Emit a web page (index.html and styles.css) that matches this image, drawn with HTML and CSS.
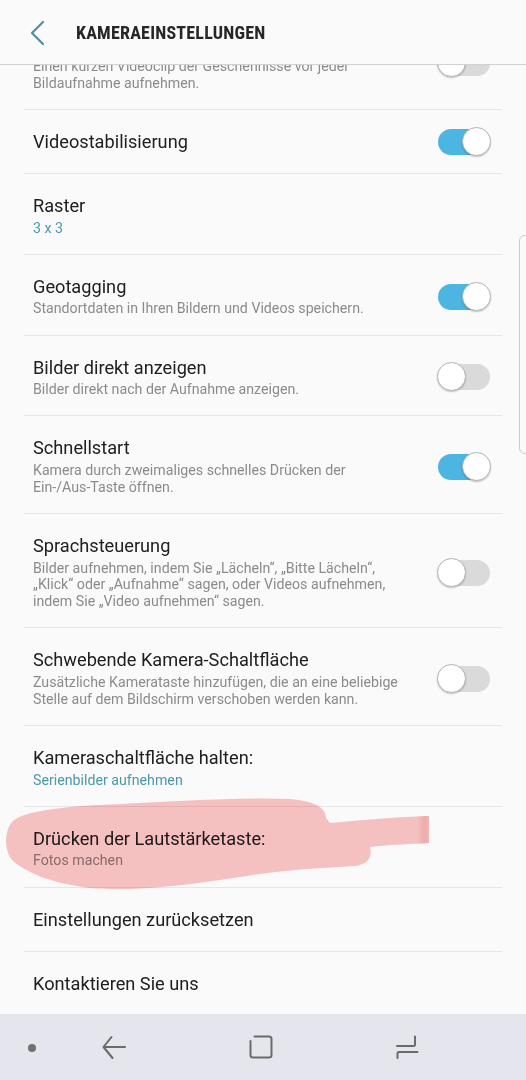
FILE: index.html
```html
<!DOCTYPE html>
<html lang="de">
<head>
<meta charset="utf-8">
<title>Kameraeinstellungen</title>
<link rel="stylesheet" href="styles.css">
</head>
<body>
<div class="screen">
  <header class="appbar">
    <svg class="back" width="24" height="28" viewBox="0 0 24 28"><path d="M17 3 L6 14 L17 25" fill="none" stroke="#4f8fa3" stroke-width="2.2" stroke-linecap="round" stroke-linejoin="round"/></svg>
    <h1 class="title">KAMERAEINSTELLUNGEN</h1>
  </header>

  <main class="viewport">
    <ul class="list">
      <li class="row">
        <div class="text">
          <div class="label">Bewegungsfoto</div>
          <div class="sub">Einen kurzen Videoclip der Geschehnisse vor jeder<br>Bildaufnahme aufnehmen.</div>
        </div>
        <span class="switch"></span>
      </li>
      <li class="row single">
        <div class="text"><div class="label">Videostabilisierung</div></div>
        <span class="switch on"></span>
      </li>
      <li class="row">
        <div class="text">
          <div class="label">Raster</div>
          <div class="sub accent">3 x 3</div>
        </div>
      </li>
      <li class="row">
        <div class="text">
          <div class="label">Geotagging</div>
          <div class="sub">Standortdaten in Ihren Bildern und Videos speichern.</div>
        </div>
        <span class="switch on"></span>
      </li>
      <li class="row">
        <div class="text">
          <div class="label">Bilder direkt anzeigen</div>
          <div class="sub">Bilder direkt nach der Aufnahme anzeigen.</div>
        </div>
        <span class="switch"></span>
      </li>
      <li class="row">
        <div class="text">
          <div class="label">Schnellstart</div>
          <div class="sub">Kamera durch zweimaliges schnelles Drücken der<br>Ein-/Aus-Taste öffnen.</div>
        </div>
        <span class="switch on"></span>
      </li>
      <li class="row">
        <div class="text">
          <div class="label">Sprachsteuerung</div>
          <div class="sub">Bilder aufnehmen, indem Sie „Lächeln“, „Bitte Lächeln“,<br>„Klick“ oder „Aufnahme“ sagen, oder Videos aufnehmen,<br>indem Sie „Video aufnehmen“ sagen.</div>
        </div>
        <span class="switch"></span>
      </li>
      <li class="row">
        <div class="text">
          <div class="label">Schwebende Kamera-Schaltfläche</div>
          <div class="sub">Zusätzliche Kamerataste hinzufügen, die an eine beliebige<br>Stelle auf dem Bildschirm verschoben werden kann.</div>
        </div>
        <span class="switch"></span>
      </li>
      <li class="row">
        <div class="text">
          <div class="label">Kameraschaltfläche halten:</div>
          <div class="sub accent">Serienbilder aufnehmen</div>
        </div>
      </li>
      <li class="row">
        <div class="text">
          <div class="label">Drücken der Lautstärketaste:</div>
          <div class="sub">Fotos machen</div>
        </div>
      </li>
      <li class="row single">
        <div class="text"><div class="label">Einstellungen zurücksetzen</div></div>
      </li>
      <li class="row single">
        <div class="text"><div class="label">Kontaktieren Sie uns</div></div>
      </li>
    </ul>
  </main>

  <nav class="navbar">
    <span class="pin"></span>
    <span class="navbtn">
      <svg width="24" height="24" viewBox="0 0 24 24"><path d="M23 12 H2 M9.5 2 L1.5 12 L10.5 23" fill="none" stroke="#6a6a6a" stroke-width="2" stroke-linecap="round" stroke-linejoin="round"/></svg>
    </span>
    <span class="navbtn">
      <svg width="24" height="24" viewBox="0 0 24 24"><path d="M1.5 6 V20 Q1.5 22.5 4 22.5 H20 Q22.5 22.5 22.5 20 V4 Q22.5 1.5 20 1.5 H5.5" fill="none" stroke="#6a6a6a" stroke-width="2" stroke-linecap="round"/></svg>
    </span>
    <span class="navbtn">
      <svg width="24" height="24" viewBox="0 0 24 24"><path d="M2 11 H18.5 Q20 11 20 9.5 V1.5 M22.5 17 H4 Q2.5 17 2.5 18.5 V23" fill="none" stroke="#6a6a6a" stroke-width="2" stroke-linecap="round"/></svg>
    </span>
  </nav>

  <div class="edge-handle"></div>

  <svg class="marker" width="440" height="110" viewBox="0 790 440 110">
    <defs>
      <linearGradient id="tip" x1="0" x2="1" y1="0" y2="0">
        <stop offset="0" stop-color="#f8c2c2"/>
        <stop offset="0.6" stop-color="#f4afaf"/>
        <stop offset="1" stop-color="#f6baba"/>
      </linearGradient>
    </defs>
    <path d="M12 822 C20 812 60 806 120 804 C180 801 240 797 290 799 C315 801 326 808 326 818 L330 823 C360 820 400 817 429 816 L429 843 C410 844 385 845 370 847 C372 856 370 864 355 866 C320 868 280 870 240 877 C190 885 130 892 90 888 C50 883 25 872 12 860 C4 850 4 832 12 822 Z" fill="#fac5c4"/>
    <path d="M418 816.6 L429 816 L429 843 L418 843.5 Z" fill="url(#tip)"/>
  </svg>
</div>
</body>
</html>
```

FILE: styles.css
```css
html, body {
  margin: 0;
  padding: 0;
  background: #fafafa;
}

.screen {
  position: relative;
  width: 526px;
  height: 1080px;
  overflow: hidden;
  background: #fafafa;
  font-family: Roboto, "Noto Sans", sans-serif;
  color: #212121;
  display: flex;
  flex-direction: column;
}

.appbar {
  position: relative;
  z-index: 2;
  flex: 0 0 64px;
  height: 64px;
  display: flex;
  align-items: center;
  padding-left: 26px;
  gap: 26px;
  background: #fafafa;
  box-shadow: 0 1px 1px rgba(0, 0, 0, 0.08), 0 1px 0 #e4e4e4;
}

.back {
  display: block;
  margin-top: 1px;
}

.title {
  margin: 0;
  font-family: "Roboto Condensed", "Liberation Sans Narrow", Roboto, sans-serif;
  font-weight: 700;
  font-size: 18px;
  letter-spacing: 0.2px;
  color: #262626;
  margin-top: 1px;
}

.viewport {
  flex: 0 0 950px;
  height: 950px;
  overflow: hidden;
}

.list {
  list-style: none;
  margin: -51.5px 24px 0;
  padding: 0;
}

.row {
  display: flex;
  align-items: center;
  justify-content: space-between;
  gap: 16px;
  padding: 21px 12px 17.5px 9px;
  border-bottom: 1px solid #e6e6e6;
}

.row.single {
  padding-bottom: 21px;
}

.text {
  flex: 1;
  min-width: 0;
}

.label {
  font-size: 18.2px;
  line-height: 21px;
  color: #202020;
  white-space: nowrap;
}

.sub {
  margin-top: 3.5px;
  font-size: 14.2px;
  line-height: 16.8px;
  color: #8b8b8b;
  white-space: nowrap;
}

.sub.accent {
  color: #4a98aa;
}

.switch {
  position: relative;
  flex: 0 0 52px;
  width: 52px;
  height: 26px;
  margin: -4px 0;
  border-radius: 13px;
  background: #dadada;
}

.switch::after {
  content: "";
  position: absolute;
  top: -2px;
  left: -1px;
  width: 29px;
  height: 29px;
  box-sizing: border-box;
  border-radius: 50%;
  background: #ffffff;
  border: 1px solid #b4b4b4;
  box-shadow: 0 1px 1.5px rgba(0, 0, 0, 0.22);
}

.switch.on {
  background: #4cb5e1;
}

.switch.on::after {
  left: auto;
  right: -1px;
}

.navbar {
  flex: 0 0 66px;
  height: 66px;
  background: #e5e5ee;
  display: grid;
  grid-template-columns: 41px repeat(3, 146.5px);
  align-items: center;
}

.pin {
  justify-self: end;
  margin-right: 5px;
  width: 8px;
  height: 8px;
  border-radius: 50%;
  background: #707070;
  margin-top: 2px;
}

.navbtn {
  display: flex;
  justify-content: center;
  align-items: center;
}

.navbtn svg {
  display: block;
}

.edge-handle {
  position: absolute;
  left: 519px;
  top: 235px;
  width: 20px;
  height: 217px;
  border: 1px solid #cbcbcb;
  border-radius: 6px;
}

.marker {
  position: absolute;
  left: 0;
  top: 790px;
  mix-blend-mode: multiply;
  pointer-events: none;
}
```
